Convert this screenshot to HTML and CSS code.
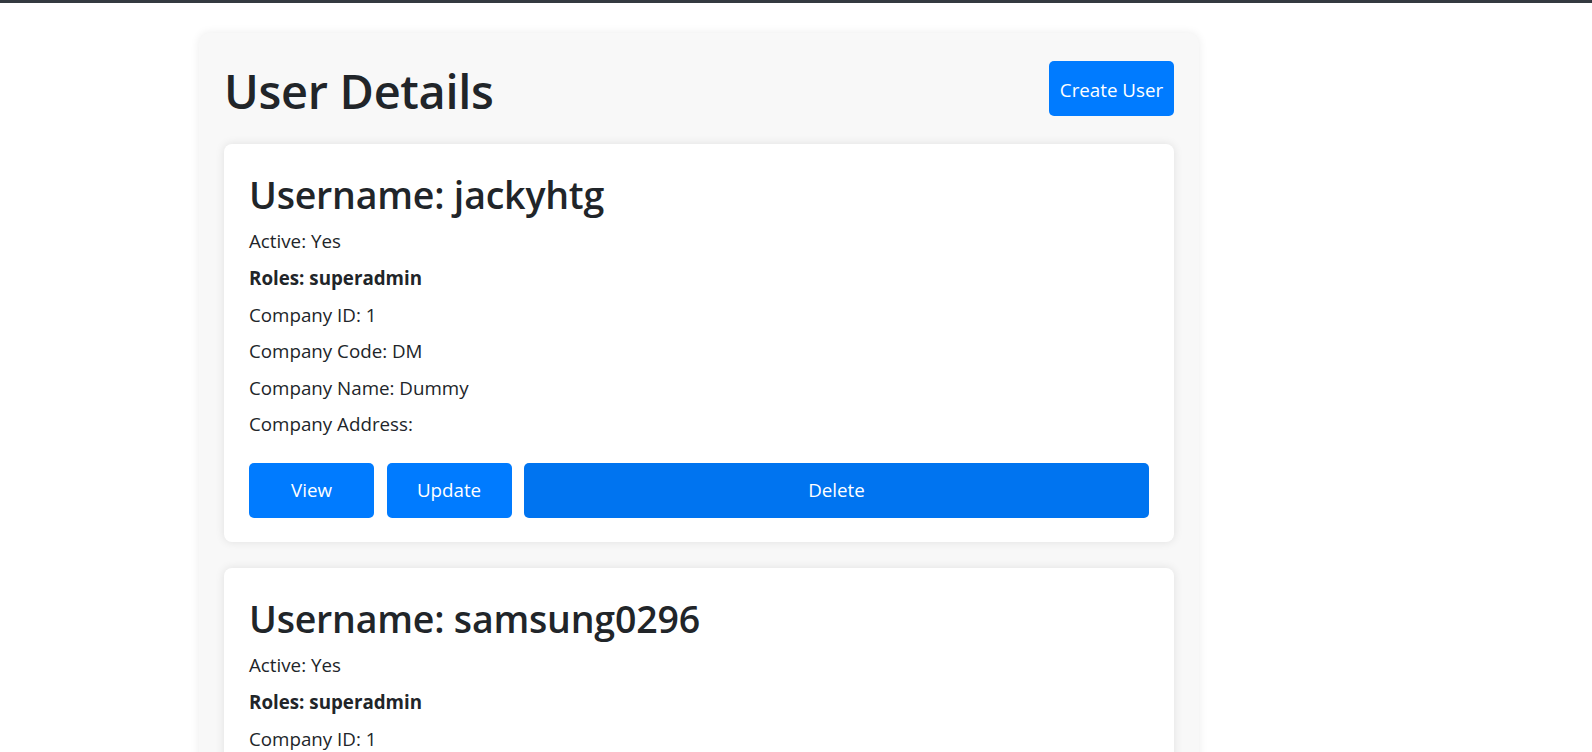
FILE: index.html
```html
<!DOCTYPE html>
<html lang="en">
<head>
<meta charset="utf-8">
<title>User Details</title>
<link rel="stylesheet" href="styles.css">
</head>
<body>
<div class="topbar"></div>
<main class="panel">
  <header class="panel-head">
    <h1 class="title">User Details</h1>
    <button class="btn btn-create">Create User</button>
  </header>

  <section class="card">
    <h2 class="card-title">Username: jackyhtg</h2>
    <p class="field">Active: Yes</p>
    <p class="field field-strong">Roles: superadmin</p>
    <p class="field">Company ID: 1</p>
    <p class="field">Company Code: DM</p>
    <p class="field">Company Name: Dummy</p>
    <p class="field">Company Address:</p>
    <div class="actions">
      <button class="btn btn-fixed">View</button>
      <button class="btn btn-fixed">Update</button>
      <button class="btn btn-wide">Delete</button>
    </div>
  </section>

  <section class="card">
    <h2 class="card-title">Username: samsung0296</h2>
    <p class="field">Active: Yes</p>
    <p class="field field-strong">Roles: superadmin</p>
    <p class="field">Company ID: 1</p>
    <p class="field">Company Code: DM</p>
    <p class="field">Company Name: Dummy</p>
    <p class="field">Company Address:</p>
    <div class="actions">
      <button class="btn btn-fixed">View</button>
      <button class="btn btn-fixed">Update</button>
      <button class="btn btn-wide">Delete</button>
    </div>
  </section>
</main>
</body>
</html>
```

FILE: styles.css
```css
html {
  scrollbar-width: none;
}
html::-webkit-scrollbar {
  display: none;
}
body {
  margin: 0;
  background: #ffffff;
  font-family: "Open Sans", "Noto Sans", sans-serif;
  color: #212529;
  font-size: 18.75px;
}
.topbar {
  height: 3px;
  background: #343a40;
}
.panel {
  width: 1000px;
  box-sizing: border-box;
  margin: 30px 0 0 199px;
  padding: 25px;
  background: #f8f8f8;
  border-radius: 10px;
  box-shadow: 0 0 10px rgba(0, 0, 0, 0.08);
}
.panel-head {
  display: flex;
  align-items: center;
  justify-content: space-between;
  min-height: 61px;
  margin-bottom: 25px;
}
.title {
  margin: 0;
  padding-top: 4px;
  font-size: 46.9px;
  line-height: 56px;
  font-weight: 600;
  letter-spacing: -0.3px;
  color: #212529;
}
.btn {
  font-family: "Open Sans", "Noto Sans", sans-serif;
  font-size: 18.75px;
  line-height: 28px;
  color: #ffffff;
  background: #007bff;
  border: none;
  border-radius: 5px;
  height: 55px;
  padding: 0 8px;
  white-space: nowrap;
  cursor: pointer;
}
.btn-create {
  width: 125px;
  padding-top: 2px;
}
.card {
  background: #ffffff;
  border-radius: 8px;
  box-shadow: 0 0 10px rgba(0, 0, 0, 0.1);
  padding: 25px 25px 24px;
  margin-bottom: 26px;
}
.card-title {
  margin: 3px 0 10.4px;
  font-size: 37.5px;
  line-height: 45px;
  font-weight: 600;
  letter-spacing: -0.2px;
}
.field {
  margin: 0 0 8px;
  line-height: 28.6px;
}
.field-strong {
  font-weight: 700;
}
.actions {
  display: flex;
  gap: 12.5px;
  margin-top: 24px;
}
.btn-fixed {
  width: 125px;
  flex: none;
}
.btn-wide {
  flex: 1;
  background: #0074f0;
}
```
